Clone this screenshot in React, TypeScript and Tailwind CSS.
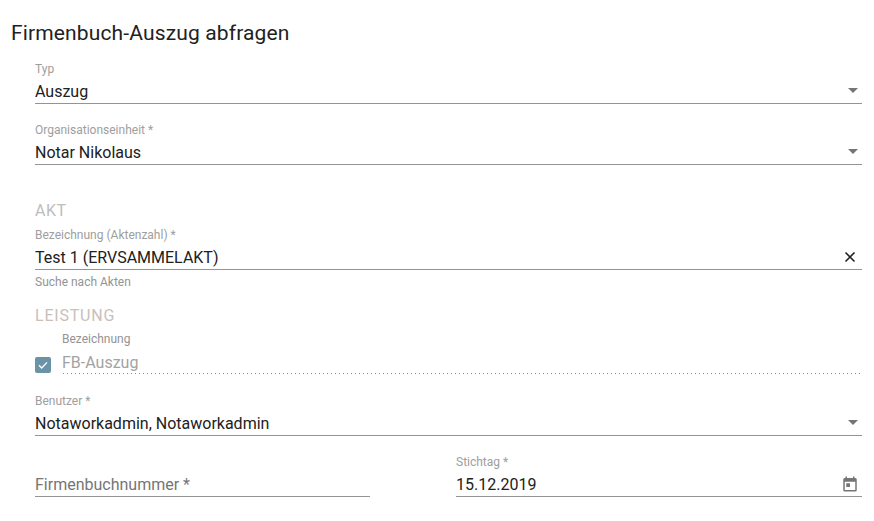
import React from "react";

const Caret = () => (
  <svg width="24" height="24" viewBox="0 0 24 24" className="shrink-0 -mr-[3px]" fill="#757575">
    <path d="M7 10l5 5 5-5z" />
  </svg>
);

const Field = ({
  label,
  value,
  icon,
  className = "",
}: {
  label: string;
  value: string;
  icon?: React.ReactNode;
  className?: string;
}) => (
  <div className={className}>
    <div className="h-[14px] text-[12px] leading-[14px] text-[#9e9e9e]">{label}</div>
    <div className="flex h-[28px] items-center justify-between border-b border-[#949494] text-[16px] text-[#212121]">
      <span className="pt-[4px] leading-[20px]">{value}</span>
      {icon}
    </div>
  </div>
);

export default function App() {
  return (
    <div
      className="h-[521px] w-[874px] overflow-hidden bg-white pl-[35px] pr-[12px]"
      style={{ fontFamily: "Roboto, sans-serif" }}
    >
      <h1 className="-ml-[24px] pt-[21px] text-[21px] leading-[24px] font-normal tracking-[0.14px] text-[#212121]">
        Firmenbuch-Auszug abfragen
      </h1>
      <Field className="mt-[17px]" label="Typ" value="Auszug" icon={<Caret />} />
      <Field className="mt-[19px]" label="Organisationseinheit *" value="Notar Nikolaus" icon={<Caret />} />
      <div className="mt-[36px] h-[20px] text-[16px] leading-[20px] tracking-[0.5px] text-[#bdbdbd]">AKT</div>
      <Field
        className="mt-[7px]"
        label="Bezeichnung (Aktenzahl) *"
        value="Test 1 (ERVSAMMELAKT)"
        icon={
          <svg width="14" height="14" viewBox="0 0 14 14" className="mr-[5px] mt-[3px]" stroke="#212121" strokeWidth="1.6" fill="none">
            <path d="M2.5 2.5l9 9M11.5 2.5l-9 9" />
          </svg>
        }
      />
      <div className="mt-[5px] h-[14px] text-[12px] leading-[14px] text-[#949494]">Suche nach Akten</div>
      <div className="mt-[17px] h-[20px] text-[16px] leading-[20px] tracking-[0.8px] text-[#c9c0bb]">LEISTUNG</div>
      <div className="mt-[6px] flex items-end">
        <div className="mb-[1px] mr-[11px] flex h-[16px] w-[16px] items-center justify-center rounded-[2px] bg-[#6b93a8]">
          <svg width="12" height="12" viewBox="0 0 12 12" fill="none" stroke="#ffffff" strokeWidth="1.3">
            <path d="M2 6.3l2.7 2.7L10 3.4" />
          </svg>
        </div>
        <div className="flex-1 pr-[2px]">
          <div className="h-[14px] text-[12px] leading-[14px] text-[#949494]">Bezeichnung</div>
          <div className="flex h-[28px] items-center bg-[linear-gradient(to_right,#8a8a8a_1px,transparent_1px)] bg-[length:4px_1px] bg-bottom bg-repeat-x pt-[6px] text-[16px] text-[#a3a3a3]">
            FB-Auszug
          </div>
        </div>
      </div>
      <Field className="mt-[20px]" label="Benutzer *" value="Notaworkadmin, Notaworkadmin" icon={<Caret />} />
      <div className="mt-[19px] flex gap-[86px]">
        <div className="flex h-[42px] w-[335px] items-end border-b border-[#949494] pb-[1px]">
          <span className="text-[16px] leading-[20px] text-[#757575]">Firmenbuchnummer *</span>
        </div>
        <Field
          className="flex-1"
          label="Stichtag *"
          value="15.12.2019"
          icon={
            <svg width="18" height="18" viewBox="0 0 24 24" fill="#757575" className="mr-[3px] mt-[2px]">
              <path d="M19 4h-1V2h-2v2H8V2H6v2H5a2 2 0 0 0-2 2v14a2 2 0 0 0 2 2h14a2 2 0 0 0 2-2V6a2 2 0 0 0-2-2zm0 16H5V9h14v11zM7 11h5v5H7z" />
            </svg>
          }
        />
      </div>
    </div>
  );
}
